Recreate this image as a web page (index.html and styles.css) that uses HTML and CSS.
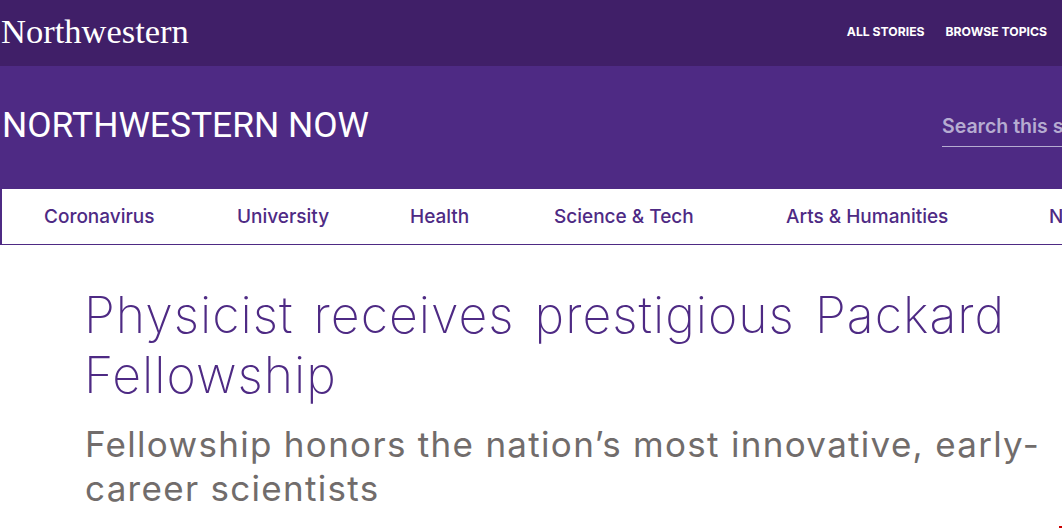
FILE: index.html
```html
<!DOCTYPE html>
<html lang="en">
<head>
<meta charset="utf-8">
<title>Physicist receives prestigious Packard Fellowship</title>
<link rel="stylesheet" href="styles.css">
</head>
<body>
<header class="topbar">
  <a class="logo" href="#">Northwestern</a>
  <nav class="toplinks"><a href="#">ALL STORIES</a><a href="#">BROWSE TOPICS</a></nav>
</header>
<section class="band">
  <div class="sitename">NORTHWESTERN NOW</div>
  <div class="search">Search this site</div>
</section>
<nav class="mainnav">
  <a href="#">Coronavirus</a>
  <a href="#">University</a>
  <a href="#">Health</a>
  <a href="#">Science &amp; Tech</a>
  <a href="#">Arts &amp; Humanities</a>
  <a href="#">Newsmakers</a>
</nav>
<main class="article">
  <h1>Physicist receives prestigious Packard Fellowship</h1>
  <h2>Fellowship honors the nation’s most innovative, early-career scientists</h2>
</main>
<span class="reddot"></span>
</body>
</html>
```
FILE: styles.css
```css
html, body { margin: 0; padding: 0; }
body { width: 1062px; height: 528px; overflow: hidden; background: #fff; font-family: "Roboto", sans-serif; position: relative; }
a { text-decoration: none; color: inherit; }
.topbar { height: 66px; background: #401f68; display: flex; justify-content: space-between; align-items: flex-start; color: #fff; }
.logo { font: 400 34.5px/1 "Liberation Serif", serif; margin: 14px 0 0 1px; }
.toplinks { display: flex; gap: 21px; margin: 24px 15px 0 0; font: 700 12.2px/15px "Inter", sans-serif; }
.band { height: 123px; background: #4e2a84; display: flex; justify-content: space-between; overflow: hidden; }
.sitename { color: #fff; font: 400 35.4px/42px "Roboto", sans-serif; margin: 38px 0 0 2px; }
.search { width: 120px; flex: none; height: 38px; margin-top: 42px; border-bottom: 1px solid #b6acd1; color: #b6acd1; font: 600 19.5px/36px "Inter", sans-serif; white-space: nowrap; overflow: hidden; }
.mainnav { height: 55px; border-left: 2px solid #4e2a84; border-bottom: 1px solid #4e2a84; display: grid; grid-template-columns: 193px 173px 144px 232px 263px 200px; align-items: center; color: #4e2a84; font: 500 19px/22px "Inter", sans-serif; white-space: nowrap; overflow: hidden; padding-left: 42px; }
.article { padding: 40px 20px 0 85px; }
h1 { margin: 0 0 0 -1px; color: #4e2a84; font: 200 50px/60px "Inter", sans-serif; letter-spacing: 1px; word-spacing: 5px; }
h2 { margin: 17px 0 0; color: #716c6b; font: 400 35px/44px "Inter", sans-serif; letter-spacing: 1.3px; }
.reddot { position: absolute; left: 1059px; top: 526px; width: 3px; height: 2px; background: #c00; }
```
